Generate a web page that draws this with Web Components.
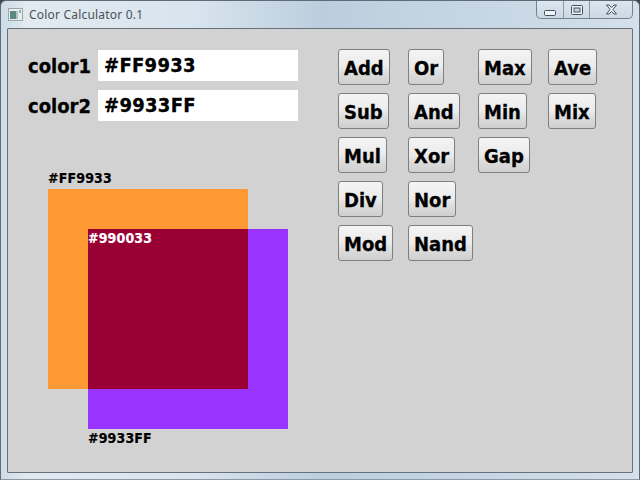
<!DOCTYPE html>
<html>
<head>
<meta charset="utf-8">
<title>Color Calculator 0.1</title>
<style>
  html, body { margin: 0; padding: 0; width: 640px; height: 480px; overflow: hidden; background: #3c4650; }
</style>
</head>
<body>
<color-window>
  <title-bar slot="title">Color Calculator 0.1</title-bar>
  <color-form></color-form>
  <button-grid>
    <calc-button>Add</calc-button><calc-button>Or</calc-button><calc-button>Max</calc-button><calc-button>Ave</calc-button>
    <calc-button>Sub</calc-button><calc-button>And</calc-button><calc-button>Min</calc-button><calc-button>Mix</calc-button>
    <calc-button>Mul</calc-button><calc-button>Xor</calc-button><calc-button>Gap</calc-button><span></span>
    <calc-button>Div</calc-button><calc-button>Nor</calc-button><span></span><span></span>
    <calc-button>Mod</calc-button><calc-button>Nand</calc-button>
  </button-grid>
</color-window>
<script>
// components
const BOLD = '"DejaVu Sans Condensed", "DejaVu Sans", Verdana, sans-serif';

class ColorWindow extends HTMLElement {
  constructor() {
    super();
    this.attachShadow({ mode: 'open' });
    this.shadowRoot.innerHTML = `
      <style>
        :host {
          display: flex; flex-direction: column; box-sizing: border-box;
          width: 640px; height: 480px; padding: 0 6px 6px 6px;
          border-radius: 6px 6px 0 0; border: 1px solid #5f6c78; border-bottom-color: #8b98a6;
          background: linear-gradient(90deg, #ccdbe6 0, #e2eaf0 4%, #d8e4ee 30%, #bccede 50%, #c6d6e4 75%, #d4e0ea 100%);
        }
        .client {
          flex: 1; display: flex; min-height: 0;
          padding: 20px 0 0 20px;
          background: #d3d2d2;
          border: 1px solid #66717c;
          border-radius: 1px;
        }
      </style>
      <slot name="title"></slot>
      <div class="client"><slot></slot></div>
    `;
  }
}

class TitleBar extends HTMLElement {
  constructor() {
    super();
    this.attachShadow({ mode: 'open' });
    this.shadowRoot.innerHTML = `
      <style>
        :host {
          display: flex; align-items: flex-start; height: 27px; flex: none;
          font: 12px "Noto Sans", sans-serif; color: #4a5056;
        }
        .icon { width: 15px; height: 13px; margin: 7px 6px 0 1px; flex: none; }
        .text { margin-top: 5px; letter-spacing: .2px; }
        window-controls { margin-left: auto; }
      </style>
      <svg class="icon" viewBox="0 0 15 13">
        <rect x=".5" y=".5" width="14" height="12" fill="#e8eef0" stroke="#9aa6ac"/>
        <rect x="2" y="3" width="6" height="8" fill="#5c8a80"/>
        <rect x="8" y="3" width="2" height="8" fill="#a9c4be"/>
        <rect x="11" y="2" width="2" height="3" fill="#8fb0c0"/>
      </svg>
      <span class="text"><slot></slot></span>
      <window-controls></window-controls>
    `;
  }
}

class WindowControls extends HTMLElement {
  constructor() {
    super();
    this.attachShadow({ mode: 'open' });
    this.shadowRoot.innerHTML = `
      <style>
        :host {
          display: flex; height: 18px; box-sizing: border-box; margin-top: 0;
          border: 1px solid #75828e; border-top: none; border-radius: 0 0 5px 5px;
          background: linear-gradient(#dbe6ef, #cbd9e5);
        }
        div { display: flex; align-items: center; justify-content: center; height: 100%; }
        div + div { border-left: 1px solid #8d9aa6; }
        svg { display: block; }
      </style>
      <div style="width:26px"><svg width="12" height="6" viewBox="0 0 12 6" style="margin-top:7px"><rect x=".5" y=".5" width="11" height="5" rx="1" fill="#eef3f7" stroke="#46505a"/></svg></div>
      <div style="width:25px"><svg width="12" height="10" viewBox="0 0 12 10"><rect x=".5" y=".5" width="11" height="9" rx="1" fill="#eef3f7" stroke="#46505a"/><rect x="3" y="3" width="6" height="4" fill="#c4d2de" stroke="#46505a" stroke-width="1"/></svg></div>
      <div style="width:42px"><svg width="13" height="11" viewBox="0 0 13 11"><path d="M1.5 1 H4 L6.5 3.6 L9 1 H11.5 L8 5.5 L11.5 10 H9 L6.5 7.4 L4 10 H1.5 L5 5.5 Z" fill="#eef3f7" stroke="#46505a" stroke-width="1" stroke-linejoin="round"/></svg></div>
    `;
  }
}

class ColorField extends HTMLElement {
  constructor() {
    super();
    this.attachShadow({ mode: 'open' });
    this.shadowRoot.innerHTML = `
      <style>
        :host {
          display: flex; align-items: center; height: 31px;
          font: bold 20px ${BOLD}; font-stretch: condensed; color: #000;
          -webkit-text-stroke: .3px #000;
        }
        .label { width: 70px; flex: none; }
        .value {
          width: 194px; height: 31px; line-height: 30px;
          padding-left: 6px; background: #fff; letter-spacing: .3px;
        }
      </style>
      <span class="label"></span>
      <div class="value"></div>
    `;
    this.shadowRoot.querySelector('.label').textContent = this.getAttribute('label');
    this.shadowRoot.querySelector('.value').textContent = this.getAttribute('value');
  }
}

class ColorForm extends HTMLElement {
  constructor() {
    super();
    this.attachShadow({ mode: 'open' });
    this.shadowRoot.innerHTML = `
      <style>
        :host {
          display: flex; flex-direction: column; flex: none; width: 310px;
          padding-top: 1px; gap: 9px;
        }
        color-canvas { margin-top: 41px; }
      </style>
      <color-field label="color1" value="#FF9933"></color-field>
      <color-field label="color2" value="#9933FF"></color-field>
      <color-canvas></color-canvas>
    `;
  }
}

// the two squares and their labels sit on a free canvas
class ColorCanvas extends HTMLElement {
  constructor() {
    super();
    this.attachShadow({ mode: 'open' });
    this.shadowRoot.innerHTML = `
      <style>
        :host {
          display: block; position: relative; width: 280px; height: 290px;
          font: bold 14px ${BOLD}; font-stretch: condensed; color: #000;
          letter-spacing: .15px; -webkit-text-stroke: .2px currentColor;
        }
        div { position: absolute; width: 200px; height: 200px; }
        span { position: absolute; line-height: 16px; white-space: nowrap; }
        .a { left: 20px; top: 18px; background: #ff9933; }
        .b { left: 60px; top: 58px; background: #9933ff; }
        .c { left: 60px; top: 58px; width: 160px; height: 160px; background: #990033; }
      </style>
      <div class="a"></div>
      <div class="b"></div>
      <div class="c"></div>
      <span style="left:20px;top:-1px">#FF9933</span>
      <span style="left:60px;top:59px;color:#fff">#990033</span>
      <span style="left:60px;top:259px">#9933FF</span>
    `;
  }
}

class ButtonGrid extends HTMLElement {
  constructor() {
    super();
    this.attachShadow({ mode: 'open' });
    this.shadowRoot.innerHTML = `
      <style>
        :host {
          display: grid; align-content: start; justify-items: start;
          grid-template-columns: repeat(4, 70px); grid-auto-rows: 36px; row-gap: 8px;
        }
      </style>
      <slot></slot>
    `;
  }
}

class CalcButton extends HTMLElement {
  constructor() {
    super();
    this.attachShadow({ mode: 'open' });
    this.shadowRoot.innerHTML = `
      <style>
        :host {
          display: flex; align-items: center; box-sizing: border-box; height: 36px;
          padding: 2px 5px 0 5px;
          border: 1px solid #7f7f7f; border-radius: 3px;
          background: linear-gradient(#f4f4f4 0, #ebebeb 50%, #dedede 66%, #cfcfcf 100%);
          font: bold 20px ${BOLD}; font-stretch: condensed; color: #000;
          -webkit-text-stroke: .3px #000;
        }
      </style>
      <slot></slot>
    `;
  }
}

customElements.define('window-controls', WindowControls);
customElements.define('title-bar', TitleBar);
customElements.define('color-window', ColorWindow);
customElements.define('color-field', ColorField);
customElements.define('color-canvas', ColorCanvas);
customElements.define('color-form', ColorForm);
customElements.define('button-grid', ButtonGrid);
customElements.define('calc-button', CalcButton);
</script>
</body>
</html>
